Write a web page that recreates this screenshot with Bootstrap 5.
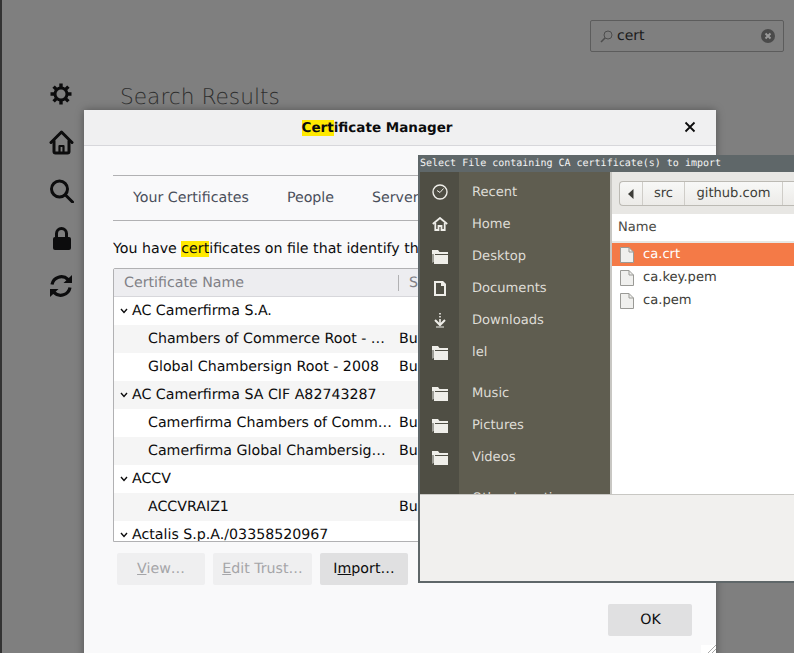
<!doctype html>
<html lang="en"><head><meta charset="utf-8"><title>Certificate Manager</title>
<link rel="stylesheet" href="https://cdn.jsdelivr.net/npm/bootstrap@5.3.0/dist/css/bootstrap.min.css">
<style>
html,body{height:100%;overflow:hidden}
body{background:#7f7f7f;font-family:"DejaVu Sans",sans-serif;font-size:14.2px;color:#0c0c0d;position:relative;border-left:2px solid #333;text-rendering:geometricPrecision}
.side-ic{position:absolute;left:46px;width:28px;height:28px;color:#0c0c0d}
.side-ic svg,.fic svg{display:block}
.pg-title{position:absolute;left:118px;top:84px;font-size:21.7px;font-weight:200;line-height:28px;color:#2e2e2e}
.srch{position:absolute;left:588px;top:20px;width:194px;height:32px;border:1px solid #5c5c5c;border-radius:2px;padding:0 8px 0 9px}
.srch span{flex:1;padding-left:4px;color:#1b1b1b;font-size:14px}
.cm{position:absolute;left:82px;top:110px;width:632px;height:560px;background:#f9f9fa;border-radius:2px 2px 0 0;box-shadow:0 0 8px rgba(0,0,0,.35)}
.cm-h{height:36px;background:#f0f0f1;border-bottom:1px solid #d7d7db;font-weight:700;font-size:13.5px;position:relative;padding:1px 46px 0 0}
.cm-x{position:absolute;right:18px;top:9px;width:16px;height:16px}
mark.hl{background:#ffe900;color:inherit;padding:0}
.cm-b{padding:29px 0 0 29px;width:603px}
.tabs-r{border-top:1px solid #b1b1b3;border-bottom:1px solid #b1b1b3;height:46px;padding:1px 0 0 20px;gap:38px;color:#4a4f5a;white-space:nowrap;overflow:hidden}
.intro{margin-top:19px;line-height:18px;white-space:nowrap;overflow:hidden;height:18px}
.tree{margin-top:10px;height:274px;border:1px solid #b1b1b3;border-radius:2px 2px 0 0;background:#fff;width:603px;overflow:hidden}
.th{height:28px;background:#ededf0;border-bottom:1px solid #d7d7db;color:#808086;padding-top:2px}
.th1{width:284px;padding-left:10px}
.th2{border-left:1px solid #b1b1b3;height:16px;padding-left:10px;line-height:16px;margin-top:-2px}
.tr{height:28px;white-space:nowrap;padding-top:1px}
.tr:nth-child(even){background:#f5f5f5}
.tr .n{width:284px;flex:none;overflow:hidden}
.tr.g .n{padding-left:6px;display:flex;align-items:center;gap:4px;width:auto}
.tr.c .n{padding-left:34px}
.tr .s{padding-left:1px}
.btns{margin-top:11px;padding-left:4px;gap:8px}
.fx-b{height:32px;border-radius:2px;background:#e0e0e1;color:#0c0c0d;text-align:center;line-height:32px;white-space:nowrap;border:0}
.w88{width:88px}.w99{width:99px}
.fx-b.dis{background:#efeff0;color:#a5a5a8}
.fx-ok{position:absolute;left:524px;top:494px;width:84px;padding-left:1px}
.grip{position:absolute;right:0;top:535px;display:block}
.fd{position:absolute;left:416px;top:155px;width:380px;height:428px;background:#5f6769;padding:0 0 2px 2px;overflow:hidden}
.fd-t{height:17px;color:#f4f4f4;font-family:"DejaVu Sans Mono",monospace;font-size:10px;line-height:17px;white-space:nowrap}
.fd-m{height:322px}
.fd-rail{width:39px;background:#4f4e44;flex:none;overflow:hidden;padding-top:4px}
.fd-list{width:151px;background:#5f5d50;flex:none;color:#dedcd6;font-size:13.1px;overflow:hidden;padding-top:5px}
.fd-sep{width:2px;background:#c8c7c3;flex:none}
.fic,.fl{height:32px;line-height:32px}
.fic{display:flex;align-items:center;justify-content:center;color:#efeee9}
.fl{padding-left:13px}
.gap9{height:9px}
.fd-main{flex:1;background:#fff;min-width:0;font-size:13.1px;color:#3d3d38}
.pathb{height:42px;background:#e8e7e4;padding:9px 0 0 7px}
.crumbs{height:25px;border:1px solid #bcbab4;border-right:0;border-radius:4px 0 0 4px;background:linear-gradient(#f8f8f7,#ecebe8);color:#3d3d38;line-height:23px}
.crumbs>div{border-right:1px solid #cfcdc8}
.cb0{width:23px;display:flex;align-items:center;justify-content:center}
.cb1{width:42px;text-align:center}
.cb2{width:98px;text-align:center}
.nameh{height:29px;line-height:27px;padding-left:6px;border-bottom:2px solid #e8e7e4;color:#4a4a45}
.fr{height:23px;display:flex;align-items:center;padding-left:8px;gap:9px}
.fr.on{background:#f47a47;color:#fff}
.fd-bot{height:87px;background:#f1f0ee;border-top:1px solid #c8c7c3}
</style></head><body>
<div class="side-ic" style="top:81px"><svg width="26" height="26" viewBox="0 0 26 26"><g stroke="#0c0c0d" stroke-width="3.4"><path d="M13 2.500V6.500M13 19.500V23.500M2.500 13H6.500M19.500 13H23.500M5.600 5.600L8.400 8.400M17.600 17.600L20.400 20.400M20.400 5.600L17.600 8.400M8.400 17.600L5.600 20.400"/></g><circle cx="13" cy="13" r="6" fill="none" stroke="#0c0c0d" stroke-width="3"/></svg></div>
<div class="side-ic" style="top:129px"><svg width="26" height="26" viewBox="0 0 26 26" fill="none" stroke="#0c0c0d" stroke-width="3" stroke-linejoin="round" stroke-linecap="round"><path d="M3 13.500L13.500 3L24 13.500"/><path d="M6 12V22.500Q6 24 7.500 24H19.500Q21 24 21 22.500V12"/><path d="M11.500 24V17H15.500V24" stroke-width="2.200"/></svg></div>
<div class="side-ic" style="top:177px"><svg width="26" height="26" viewBox="0 0 26 26" fill="none" stroke="#0c0c0d" stroke-width="3"><circle cx="11.500" cy="12" r="8"/><path d="M17.500 18L24.500 25" stroke-linecap="round"/></svg></div>
<div class="side-ic" style="top:225px"><svg width="26" height="26" viewBox="0 0 26 26"><path d="M8.500 12V8.500a5 5 0 0 1 10 0V12" fill="none" stroke="#0c0c0d" stroke-width="3"/><rect x="5" y="12" width="18" height="13" rx="2" fill="#0c0c0d"/></svg></div>
<div class="side-ic" style="top:273px"><svg width="26" height="26" viewBox="0 0 26 26" fill="none" stroke="#0c0c0d" stroke-width="3.200"><path d="M4 11.500A9.500 9.500 0 0 1 20 6.500L22 9"/><path d="M24 2V10H15.500Z" fill="#0c0c0d" stroke="none"/><path d="M22 14.500A9.500 9.500 0 0 1 6 19.500L4 17"/><path d="M2 24V16H10.500Z" fill="#0c0c0d" stroke="none"/></svg></div>
<div class="pg-title">Search Results</div>
<div class="srch d-flex align-items-center">
<svg width="13" height="13" viewBox="0 0 13 13" fill="none" stroke="#4d4d4d" stroke-width="1"><circle cx="8" cy="5" r="4"/><path d="M5 8L1 12" stroke-width="1.600"/></svg>
<span>cert</span>
<svg width="14" height="14" viewBox="0 0 14 14"><circle cx="7" cy="7" r="7" fill="#4a4a4a"/><path d="M4.500 4.500L9.500 9.500M9.500 4.500L4.500 9.500" stroke="#9a9a9a" stroke-width="2"/></svg>
</div>
<div class="cm">
<div class="cm-h d-flex align-items-center justify-content-center"><span><mark class="hl">Cert</mark>ificate Manager</span>
<svg class="cm-x" viewBox="0 0 16 16"><path d="M3.500 3.500L12.500 12.500M12.500 3.500L3.500 12.500" stroke="#0c0c0d" stroke-width="1.800"/></svg></div>
<div class="cm-b">
<div class="tabs-r d-flex align-items-center"><span>Your Certificates</span><span>People</span><span>Servers</span></div>
<div class="intro">You have <mark class="hl">cert</mark>ificates on file that identify these certificate authorities</div>
<div class="tree">
<div class="th d-flex align-items-center"><div class="th1">Certificate Name</div><div class="th2">Security Device</div></div>
<div>
<div class="tr g d-flex align-items-center"><div class="n"><svg width="8" height="6" viewBox="0 0 8 6" fill="none" stroke="#0c0c0d" stroke-width="1.400"><path d="M1 1L4 4.500L7 1"/></svg>AC Camerfirma S.A.</div></div>
<div class="tr c d-flex align-items-center"><div class="n">Chambers of Commerce Root - …</div><div class="s">Builtin Object Token</div></div>
<div class="tr c d-flex align-items-center"><div class="n">Global Chambersign Root - 2008</div><div class="s">Builtin Object Token</div></div>
<div class="tr g d-flex align-items-center"><div class="n"><svg width="8" height="6" viewBox="0 0 8 6" fill="none" stroke="#0c0c0d" stroke-width="1.400"><path d="M1 1L4 4.500L7 1"/></svg>AC Camerfirma SA CIF A82743287</div></div>
<div class="tr c d-flex align-items-center"><div class="n">Camerfirma Chambers of Comm…</div><div class="s">Builtin Object Token</div></div>
<div class="tr c d-flex align-items-center"><div class="n">Camerfirma Global Chambersig…</div><div class="s">Builtin Object Token</div></div>
<div class="tr g d-flex align-items-center"><div class="n"><svg width="8" height="6" viewBox="0 0 8 6" fill="none" stroke="#0c0c0d" stroke-width="1.400"><path d="M1 1L4 4.500L7 1"/></svg>ACCV</div></div>
<div class="tr c d-flex align-items-center"><div class="n">ACCVRAIZ1</div><div class="s">Builtin Object Token</div></div>
<div class="tr g d-flex align-items-center"><div class="n"><svg width="8" height="6" viewBox="0 0 8 6" fill="none" stroke="#0c0c0d" stroke-width="1.400"><path d="M1 1L4 4.500L7 1"/></svg>Actalis S.p.A./03358520967</div></div>
</div></div>
<div class="btns d-flex"><div class="fx-b dis w88"><u>V</u>iew…</div><div class="fx-b dis w99"><u>E</u>dit Trust…</div><div class="fx-b w88">I<u>m</u>port…</div></div>
</div>
<div class="fx-b fx-ok">OK</div>
<svg class="grip" width="15" height="9" viewBox="0 0 15 9"><rect width="15" height="9" fill="#fff"/><path d="M6 9L15 0M10 9L15 4" stroke="#a8a8a8"/></svg>
</div>
<div class="fd">
<div class="fd-t">Select File containing CA certificate(s) to import</div>
<div class="fd-m d-flex">
<div class="fd-rail">
<div class="fic"><svg width="16" height="16" viewBox="0 0 16 16" fill="none" stroke="#efeee9"><circle cx="8" cy="8" r="7" stroke-width="1.400"/><path d="M5 6.500L8 8.500L11.500 4.500" stroke-width="1"/></svg></div>
<div class="fic"><svg width="16" height="14" viewBox="0 0 16 14" fill="none" stroke="#efeee9" stroke-width="1.800"><path d="M.8 7L8 1L15.200 7"/><path d="M3.300 6V13H6.500V9H9.500V13H12.700V6"/></svg></div>
<div class="fic"><svg width="16" height="15" viewBox="0 0 16 15"><path d="M0 1H6L7.500 3H16V5H3V13H1.500L0 14Z" fill="#efeee9"/><path d="M2 6H16V15H2Z" fill="#efeee9"/><path d="M1 5V15" stroke="#4f4e44"/></svg></div>
<div class="fic"><svg width="12" height="15" viewBox="0 0 12 15"><path d="M1 1H8L11 4V14H1Z" fill="none" stroke="#efeee9" stroke-width="2"/><path d="M7 0H9L12 3V5H7Z" fill="#efeee9"/></svg></div>
<div class="fic"><svg width="12" height="15" viewBox="0 0 12 15"><path d="M6 0V1.500M6 3V4.500M6 6V11" stroke="#efeee9" stroke-width="1.600"/><path d="M1 7L6 12L11 7" fill="none" stroke="#efeee9" stroke-width="2"/><path d="M2 14H10" stroke="#efeee9"/></svg></div>
<div class="fic"><svg width="16" height="15" viewBox="0 0 16 15"><path d="M0 1H6L7.500 3H16V5H3V13H1.500L0 14Z" fill="#efeee9"/><path d="M2 6H16V15H2Z" fill="#efeee9"/><path d="M1 5V15" stroke="#4f4e44"/></svg></div>
<div class="gap9"></div>
<div class="fic"><svg width="16" height="15" viewBox="0 0 16 15"><path d="M0 1H6L7.500 3H16V5H3V13H1.500L0 14Z" fill="#efeee9"/><path d="M2 6H16V15H2Z" fill="#efeee9"/><path d="M1 5V15" stroke="#4f4e44"/></svg></div>
<div class="fic"><svg width="16" height="15" viewBox="0 0 16 15"><path d="M0 1H6L7.500 3H16V5H3V13H1.500L0 14Z" fill="#efeee9"/><path d="M2 6H16V15H2Z" fill="#efeee9"/><path d="M1 5V15" stroke="#4f4e44"/></svg></div>
<div class="fic"><svg width="16" height="15" viewBox="0 0 16 15"><path d="M0 1H6L7.500 3H16V5H3V13H1.500L0 14Z" fill="#efeee9"/><path d="M2 6H16V15H2Z" fill="#efeee9"/><path d="M1 5V15" stroke="#4f4e44"/></svg></div>
</div>
<div class="fd-list">
<div class="fl">Recent</div><div class="fl">Home</div><div class="fl">Desktop</div><div class="fl">Documents</div><div class="fl">Downloads</div><div class="fl">lel</div><div class="gap9"></div><div class="fl">Music</div><div class="fl">Pictures</div><div class="fl">Videos</div><div class="gap9"></div><div class="fl">Other Locations</div>
</div>
<div class="fd-sep"></div>
<div class="fd-main">
<div class="pathb"><div class="crumbs d-flex"><div class="cb0"><svg width="6" height="10" viewBox="0 0 6 10"><path d="M5.500 0V10L0 5Z" fill="#3d3d38"/></svg></div><div class="cb1">src</div><div class="cb2">github.com</div></div></div>
<div class="nameh">Name</div>
<div class="fr on"><svg width="14" height="16" viewBox="0 0 14 16"><path d="M.5.500H9L13.500 5V15.500H.5Z" fill="#f0f0ee" stroke="#9a9a96"/><path d="M9 .5V5H13.500" fill="none" stroke="#9a9a96"/></svg>ca.crt</div>
<div class="fr"><svg width="14" height="16" viewBox="0 0 14 16"><path d="M.5.500H9L13.500 5V15.500H.5Z" fill="#f0f0ee" stroke="#9a9a96"/><path d="M9 .5V5H13.500" fill="none" stroke="#9a9a96"/></svg>ca.key.pem</div>
<div class="fr"><svg width="14" height="16" viewBox="0 0 14 16"><path d="M.5.500H9L13.500 5V15.500H.5Z" fill="#f0f0ee" stroke="#9a9a96"/><path d="M9 .5V5H13.500" fill="none" stroke="#9a9a96"/></svg>ca.pem</div>
</div></div>
<div class="fd-bot"></div>
</div>
</body></html>
